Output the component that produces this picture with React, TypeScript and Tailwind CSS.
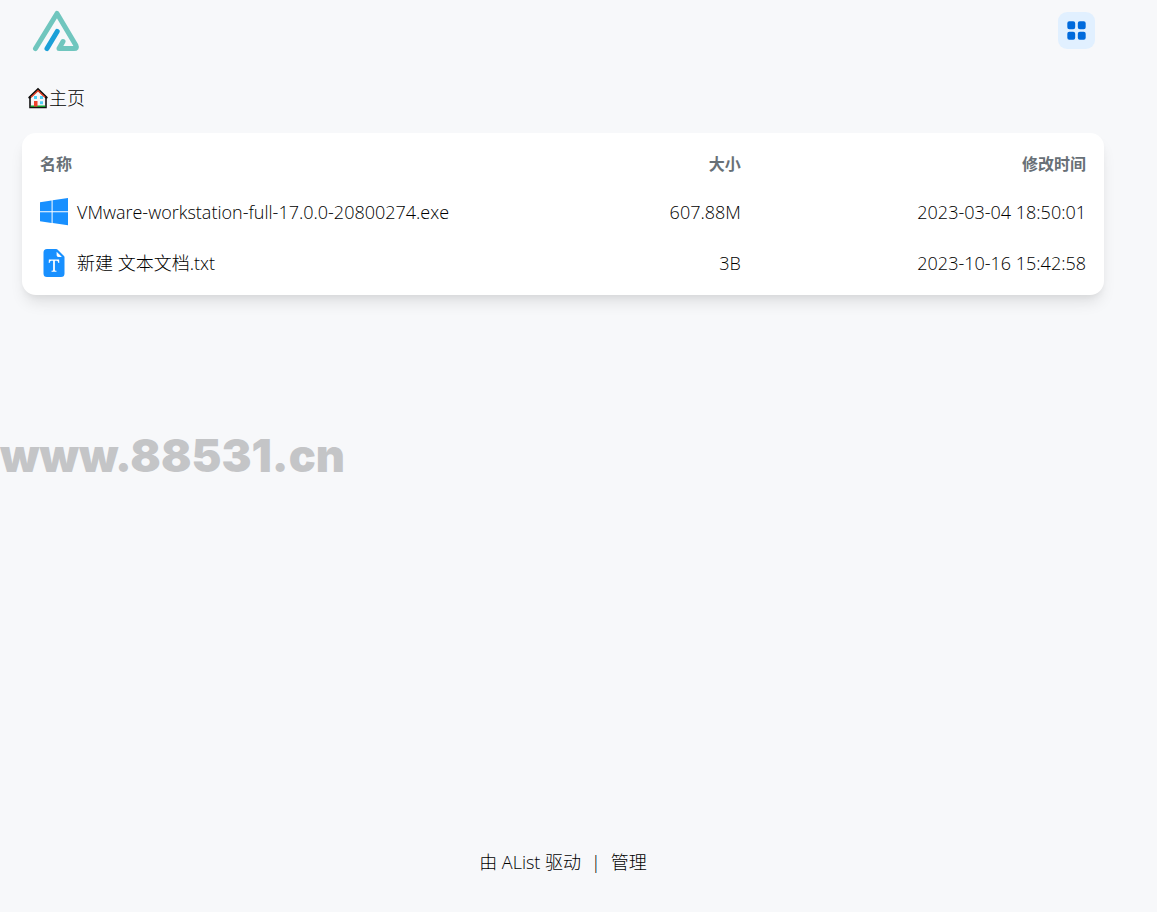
import React from "react";
import { BsFileEarmarkFontFill, BsGridFill } from "react-icons/bs";

interface FileItem {
  name: string;
  size: string;
  modified: string;
  icon: React.ReactNode;
}

const Logo = () => (
  <svg viewBox="0 0 48 42" className="h-[42px] w-12" fill="none" strokeWidth="5" strokeLinecap="round" strokeLinejoin="round">
    <path d="M3.5 38.5 L25 3.5 L44 35.5 Q45.5 38.5 42 38.5 H27 L31 31.5" stroke="#70c6be" />
    <path d="M15 38.5 L25.2 21.5" stroke="#1ba0d8" />
  </svg>
);

const HomeIcon = () => (
  <svg viewBox="0 0 20 22" className="h-[22px] w-5" aria-hidden="true">
    <path d="M2 10 10 3l8 7v10.500H2z" fill="#f4f4f6" stroke="#111" strokeWidth="1.600" />
    <path d="M2.800 18.500h14.400v1.500H2.800z" fill="#16a02c" />
    <path d="M6 14h3.500v5.500H6z" fill="#f0402a" />
    <path d="M6 9h3v3H6zM12 9h3v3h-3zM12 14.200h3v3h-3z" fill="#4fd0f7" />
    <path d="M1.500 10.500 10 2.500l8.500 8" fill="none" stroke="#111" strokeWidth="2.400" strokeLinecap="round" />
    <path d="M3 10.300 10 3.700l7 6.600" fill="none" stroke="#e8432b" strokeWidth="1.300" />
  </svg>
);

const WindowsIcon = () => (
  <svg viewBox="0 0 28 28" className="h-7 w-7" fill="#1890ff" aria-hidden="true">
    <path d="M0 4.200 11.600 2.400V13.200H0zM12.600 2.300 28 0V13.200H12.600zM0 14.200H11.600V25L0 23.300zM12.600 14.200H28V27.200L12.600 25.100z" />
  </svg>
);

const files: FileItem[] = [
  {
    name: "VMware-workstation-full-17.0.0-20800274.exe",
    size: "607.88M",
    modified: "2023-03-04 18:50:01",
    icon: <WindowsIcon />,
  },
  {
    name: "新建 文本文档.txt",
    size: "3B",
    modified: "2023-10-16 15:42:58",
    icon: <BsFileEarmarkFontFill className="h-7 w-7 text-[#1890ff]" />,
  },
];

const FileTable = ({ data }: { data: FileItem[] }) => (
  <div className="rounded-[14px] bg-white px-[18px] pt-2 pb-[7px] shadow-[0_10px_15px_-3px_rgba(0,0,0,0.1),0_4px_6px_-2px_rgba(0,0,0,0.05)]">
    <table className="w-full table-fixed">
      <thead>
        <tr className="h-[45px] text-base text-[#687076]">
          <th className="w-1/2 text-left font-bold">名称</th>
          <th className="w-[17%] text-right font-bold">大小</th>
          <th className="w-[33%] text-right font-bold">修改时间</th>
        </tr>
      </thead>
      <tbody>
        {data.map((file) => (
          <tr key={file.name} className="h-[51px] whitespace-nowrap">
            <td>
              <a href="#" className="flex items-center gap-[9px]">
                {file.icon}
                {file.name}
              </a>
            </td>
            <td className="text-right">{file.size}</td>
            <td className="text-right">{file.modified}</td>
          </tr>
        ))}
      </tbody>
    </table>
  </div>
);

export default function App() {
  return (
    <div className="relative flex min-h-screen flex-col bg-[#f7f8fa] pr-[53px] pl-[22px] font-['Open_Sans','Noto_Sans_CJK_SC',sans-serif] text-lg font-light text-black">
      <header className="flex h-[61px] items-center justify-between pr-[9px] pl-[10px]">
        <a href="#" aria-label="AList">
          <Logo />
        </a>
        <button aria-label="Grid view" className="flex h-[37px] w-[37px] items-center justify-center rounded-[9px] bg-[#e1f0ff] text-[#006adc]">
          <BsGridFill className="h-[21px] w-[21px]" />
        </button>
      </header>

      <nav className="flex h-[72px] items-center px-[6px] pt-px">
        <a href="#" className="flex items-center gap-px">
          <HomeIcon />
          主页
        </a>
      </nav>

      <main className="grow">
        <FileTable data={files} />
      </main>

      <footer className="flex h-[100px] items-center justify-center gap-[10px]">
        <a href="#">由 AList 驱动</a>
        <span>|</span>
        <a href="#">管理</a>
      </footer>

      <div className="pointer-events-none absolute top-[424px] left-0 font-['Inter',sans-serif] text-[45px] leading-[64px] font-black text-[#c4c5c7]">
        www.88531.cn
      </div>
    </div>
  );
}
